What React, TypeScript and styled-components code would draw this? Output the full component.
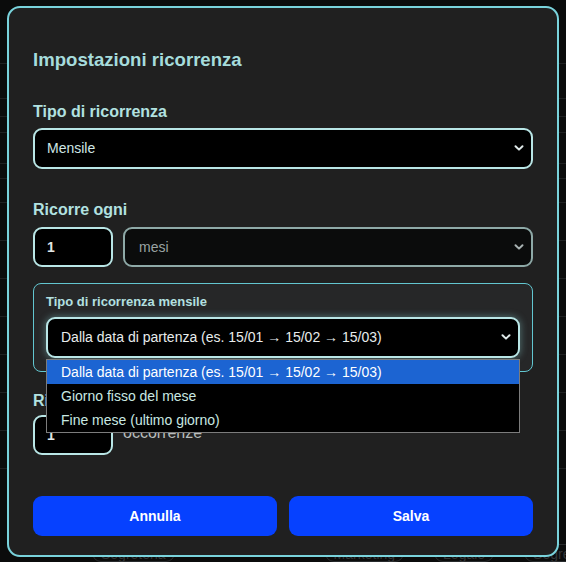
import React from "react";
import styled, { createGlobalStyle, css } from "styled-components";

const Global = createGlobalStyle`
  html, body { margin: 0; padding: 0; background: #111213; }
  body { font-family: "Liberation Sans", Arial, sans-serif; overflow: hidden; }
  * { box-sizing: border-box; }
`;

const Page = styled.div`
  width: 566px;
  height: 562px;
  background: #151617;
  display: flex;
  flex-direction: column;
  overflow: hidden;
`;

const BgRow = styled.div<{ $h: number }>`
  height: ${(p) => p.$h}px;
  flex: none;
  border-bottom: 1px solid #3a3d3f;
`;

const BgTags = styled.div`
  margin-top: auto;
  height: 14px;
  display: flex;
  gap: 30px;
  padding-left: 92px;
  color: #5d6265;
  font-size: 14px;
  line-height: 14px;
  align-items: flex-end;
`;

const BgTag = styled.span<{ $gap?: number }>`
  border: 1px solid #4a4f52;
  border-radius: 10px;
  padding: 2px 8px 0;
  margin-left: ${(p) => p.$gap ?? 0}px;
`;

const Overlay = styled.div`
  position: fixed;
  inset: 0;
  background: rgba(0, 0, 0, 0.45);
  display: flex;
  align-items: center;
  justify-content: center;
`;

const Modal = styled.div`
  width: 552px;
  background: #202020;
  border: 2px solid #79d3dc;
  border-radius: 13px;
  padding: 24px 24px 19px;
  display: flex;
  flex-direction: column;
`;

const Title = styled.h2`
  margin: 17px 0 0;
  font-size: 18.6px;
  line-height: 22px;
  font-weight: 700;
  color: #a6dcdc;
`;

const FieldLabel = styled.div<{ $top: number; $bottom: number }>`
  margin-top: ${(p) => p.$top}px;
  margin-bottom: ${(p) => p.$bottom}px;
  font-size: 16px;
  line-height: 18px;
  font-weight: 700;
  color: #b2e2e0;
`;

const SelectWrap = styled.div<{ $grow?: boolean }>`
  position: relative;
  ${(p) => p.$grow && css`flex: 1;`}
`;

const Select = styled.select<{ $variant?: "default" | "muted" | "glow" }>`
  appearance: none;
  -webkit-appearance: none;
  width: 100%;
  height: ${(p) => (p.$variant === "muted" ? 40 : 41)}px;
  border-radius: 9px;
  background: #000;
  border: 2px solid #b9e6e6;
  color: #cfe6e4;
  font-family: "Liberation Sans", Arial, sans-serif;
  font-size: 14px;
  padding: 0 30px 0 12px;
  outline: none;
  ${(p) =>
    p.$variant === "muted" &&
    css`
      background: #0b0c0c;
      border-color: #8ea9a7;
      color: #9aa3a3;
      padding-left: 14px;
    `}
  ${(p) =>
    p.$variant === "glow" &&
    css`
      color: #e8ecec;
      padding-left: 13px;
      box-shadow: 0 0 7px 1px rgba(150, 225, 225, 0.35);
    `}
`;

const ChevronBox = styled.span<{ $muted?: boolean }>`
  position: absolute;
  right: 8px;
  top: 50%;
  transform: translateY(-50%);
  width: 12px;
  height: 8px;
  display: flex;
  color: ${(p) => (p.$muted ? "#a9b3b3" : "#dfe9e9")};
  pointer-events: none;
`;

const Chevron = ({ muted }: { muted?: boolean }) => (
  <ChevronBox $muted={muted}>
    <svg width="12" height="8" viewBox="0 0 12 8">
      <path d="M2.5 2.2 L6 5.6 L9.5 2.2" fill="none" stroke="currentColor" strokeWidth="2" strokeLinecap="round" strokeLinejoin="round" />
    </svg>
  </ChevronBox>
);

const InlineRow = styled.div`
  display: flex;
  align-items: center;
  gap: 10px;
`;

const NumberInput = styled.input`
  width: 80px;
  height: 40px;
  flex: none;
  border-radius: 9px;
  background: #000;
  border: 2px solid #b9e6e6;
  color: #e2e6e6;
  font-family: "Liberation Sans", Arial, sans-serif;
  font-size: 14px;
  font-weight: 700;
  padding: 0 12px;
  outline: none;
`;

const Suffix = styled.span`
  font-size: 16px;
  line-height: 18px;
  margin-top: -3px;
  color: #b8bcbc;
`;

const SubPanel = styled.div`
  margin-top: 16px;
  border: 1px solid #62c6d0;
  border-radius: 8px;
  background: #262728;
  padding: 11px 12px 13px;
`;

const SubLabel = styled.div`
  font-size: 13px;
  line-height: 14px;
  font-weight: 700;
  color: #b3e0e0;
  margin-bottom: 8px;
`;

const Listbox = styled.ul`
  position: absolute;
  z-index: 5;
  left: 0;
  right: 0;
  top: calc(100% + 1px);
  margin: 0;
  padding: 0;
  list-style: none;
  background: #000;
  border: 1px solid #7c7c7c;
`;

const Option = styled.li<{ $active?: boolean }>`
  height: 24px;
  line-height: 24px;
  padding-left: 14px;
  font-size: 14px;
  color: ${(p) => (p.$active ? "#ffffff" : "#c9e8e2")};
  background: ${(p) => (p.$active ? "#1c64d2" : "transparent")};
  white-space: nowrap;
`;

const Actions = styled.div`
  margin-top: 41px;
  display: grid;
  grid-template-columns: 1fr 1fr;
  gap: 12px;
`;

const Button = styled.button`
  height: 40px;
  border: none;
  border-radius: 9px;
  background: #0641ff;
  color: #fff;
  font-family: "Liberation Sans", Arial, sans-serif;
  font-size: 14px;
  font-weight: 700;
  cursor: pointer;
`;

const bgRowsHeights = [64, 35, 18, 16, 31, 15, 24, 38, 38, 38, 38, 38, 38, 38];

export default function App() {
  const monthly = "Dalla data di partenza (es. 15/01 → 15/02 → 15/03)";
  return (
    <>
      <Global />
      <Page>
        {bgRowsHeights.map((h, i) => (
          <BgRow key={i} $h={h} />
        ))}
        <BgTags>
          <BgTag>Segreteria</BgTag>
          <BgTag $gap={120}>Marketing</BgTag>
          <BgTag>Legale</BgTag>
          <BgTag>Segreteria</BgTag>
        </BgTags>
      </Page>
      <Overlay>
        <Modal>
          <Title>Impostazioni ricorrenza</Title>

          <FieldLabel $top={32} $bottom={7}>Tipo di ricorrenza</FieldLabel>
          <SelectWrap>
            <Select defaultValue="mensile">
              <option value="mensile">Mensile</option>
            </Select>
            <Chevron />
          </SelectWrap>

          <FieldLabel $top={32} $bottom={8}>Ricorre ogni</FieldLabel>
          <InlineRow>
            <NumberInput type="text" defaultValue="1" />
            <SelectWrap $grow>
              <Select $variant="muted" defaultValue="mesi">
                <option value="mesi">mesi</option>
              </Select>
              <Chevron muted />
            </SelectWrap>
          </InlineRow>

          <SubPanel>
            <SubLabel>Tipo di ricorrenza mensile</SubLabel>
            <SelectWrap>
              <Select $variant="glow" defaultValue="data">
                <option value="data">{monthly}</option>
              </Select>
              <Chevron />
              <Listbox>
                <Option $active>{monthly}</Option>
                <Option>Giorno fisso del mese</Option>
                <Option>Fine mese (ultimo giorno)</Option>
              </Listbox>
            </SelectWrap>
          </SubPanel>

          <FieldLabel $top={20} $bottom={5}>Ripetizioni</FieldLabel>
          <InlineRow>
            <NumberInput type="text" defaultValue="1" />
            <Suffix>occorrenze</Suffix>
          </InlineRow>

          <Actions>
            <Button>Annulla</Button>
            <Button>Salva</Button>
          </Actions>
        </Modal>
      </Overlay>
    </>
  );
}
